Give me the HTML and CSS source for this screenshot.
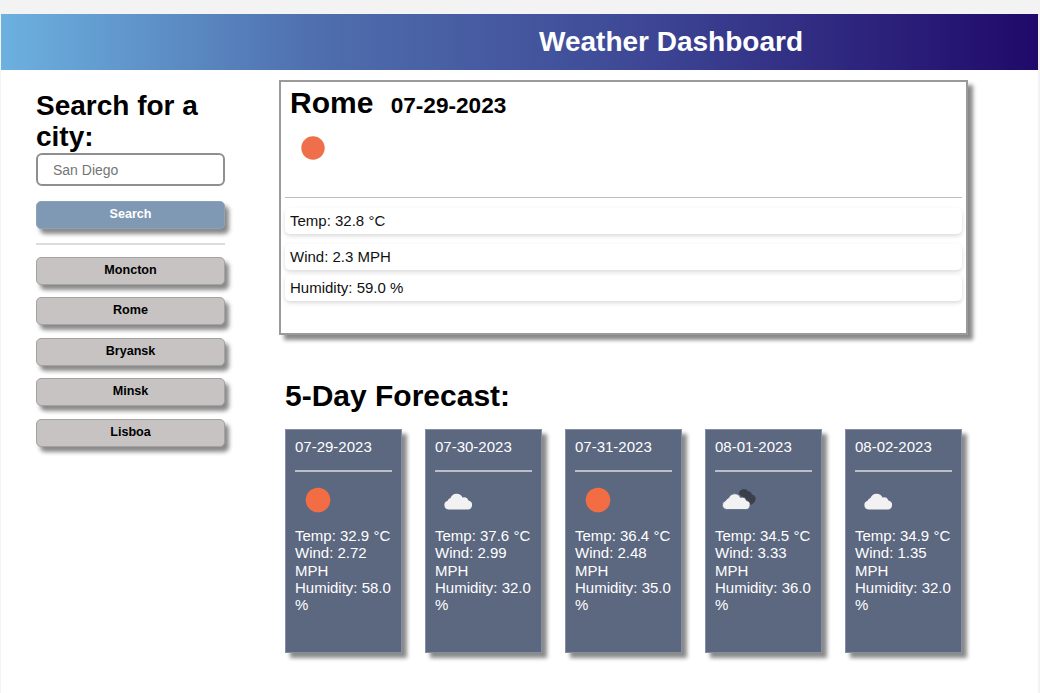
FILE: index.html
```html
<!DOCTYPE html>
<html lang="en">
  <head>
    <meta charset="UTF-8" />
    <meta name="viewport" content="width=device-width, initial-scale=1.0" />
    <title>Weather Dashboard</title>
    <link rel="stylesheet" href="styles.css">
  </head>
  <body>
    <div class="page">
      <!-- Website title -->
      <header class="top-bar">
        <h1>Weather Dashboard</h1>
      </header>

      <div class="content">
        <!-- City search -->
        <aside class="sidebar">
          <h2 class="search-title">Search for a city:</h2>
          <input class="search-input" type="text" placeholder="San Diego" />
          <button class="btn btn-search">Search</button>
          <hr class="side-line" />
          <button class="btn btn-city">Moncton</button>
          <button class="btn btn-city">Rome</button>
          <button class="btn btn-city">Bryansk</button>
          <button class="btn btn-city">Minsk</button>
          <button class="btn btn-city">Lisboa</button>
        </aside>

        <main class="main">
          <!-- Current weather -->
          <section class="current">
            <h2 class="current-title">Rome <span class="current-date">07-29-2023</span></h2>
            <div class="current-icon">
              <svg width="50" height="50" viewBox="0 0 50 50"><circle cx="25" cy="25" r="11.700" fill="#ef6f4c" /></svg>
            </div>
            <hr class="current-line" />
            <p class="stat stat-temp">Temp: 32.8 °C</p>
            <p class="stat stat-wind">Wind: 2.3 MPH</p>
            <p class="stat stat-hum">Humidity: 59.0 %</p>
          </section>

          <!-- Forecast -->
          <h2 class="forecast-title">5-Day Forecast:</h2>
          <section class="forecast">
            <article class="day">
              <p class="day-date">07-29-2023</p>
              <hr class="day-line" />
              <svg class="day-icon" width="50" height="50" viewBox="0 0 50 50"><circle cx="23" cy="25" r="12.300" fill="#f26d43" /></svg>
              <p class="day-text">Temp: 32.9 °C<br />Wind: 2.72 MPH<br />Humidity: 58.0 %</p>
            </article>
            <article class="day">
              <p class="day-date">07-30-2023</p>
              <hr class="day-line" />
              <svg class="day-icon" width="50" height="50" viewBox="0 0 50 50"><path d="M13.500 34.500H32.500A4.500 4.500 0 0 0 33.500 25.600A5 5 0 0 0 27.500 22.500A6.500 6.500 0 0 0 15.500 23A4.500 4.500 0 0 0 12.600 25.700A4.500 4.500 0 0 0 13.500 34.500Z" fill="#f2f2f2" /></svg>
              <p class="day-text">Temp: 37.6 °C<br />Wind: 2.99 MPH<br />Humidity: 32.0 %</p>
            </article>
            <article class="day">
              <p class="day-date">07-31-2023</p>
              <hr class="day-line" />
              <svg class="day-icon" width="50" height="50" viewBox="0 0 50 50"><circle cx="23" cy="25" r="12.300" fill="#f26d43" /></svg>
              <p class="day-text">Temp: 36.4 °C<br />Wind: 2.48 MPH<br />Humidity: 35.0 %</p>
            </article>
            <article class="day">
              <p class="day-date">08-01-2023</p>
              <hr class="day-line" />
              <svg class="day-icon" width="50" height="50" viewBox="0 0 50 50"><path d="M24 19A5 5 0 0 1 33 16A5 5 0 0 1 37 19.500A4.500 4.500 0 0 1 39 27.500L36 30Z" fill="#3b3f4a" /><path d="M11.500 34.500H30.500A4.500 4.500 0 0 0 31.500 25.600A5 5 0 0 0 25.500 22.500A6.500 6.500 0 0 0 13.500 23A4.500 4.500 0 0 0 10.600 25.700A4.500 4.500 0 0 0 11.500 34.500Z" fill="#f2f2f2" stroke="#5c6780" stroke-width="0.800" /></svg>
              <p class="day-text">Temp: 34.5 °C<br />Wind: 3.33 MPH<br />Humidity: 36.0 %</p>
            </article>
            <article class="day">
              <p class="day-date">08-02-2023</p>
              <hr class="day-line" />
              <svg class="day-icon" width="50" height="50" viewBox="0 0 50 50"><path d="M13.500 34.500H32.500A4.500 4.500 0 0 0 33.500 25.600A5 5 0 0 0 27.500 22.500A6.500 6.500 0 0 0 15.500 23A4.500 4.500 0 0 0 12.600 25.700A4.500 4.500 0 0 0 13.500 34.500Z" fill="#f2f2f2" /></svg>
              <p class="day-text">Temp: 34.9 °C<br />Wind: 1.35 MPH<br />Humidity: 32.0 %</p>
            </article>
          </section>
        </main>
      </div>
    </div>
  </body>
</html>
```

FILE: styles.css
```css
/* Full website */
body {
  font-family: "Liberation Sans", Arial, sans-serif;
  background-color: #f3f3f4;
  margin: 0;
  padding: 14px 2px 0 1px;
  color: #000;
}

.page {
  background-color: #fff;
  height: 679px;
  overflow: hidden;
}

/* Website title */
.top-bar {
  height: 56px;
  background: linear-gradient(90deg, #6cb1e0, #4f6fae 30%, #3f4a97 60%, #20096a);
  display: flex;
  align-items: center;
  justify-content: center;
  padding-left: 303px;
  box-sizing: border-box;
}
.top-bar h1 {
  margin: 0;
  color: #fff;
  font-size: 28px;
  line-height: 56px;
}

.content {
  display: flex;
}

/* City search */
.sidebar {
  width: 189px;
  margin-left: 35px;
  padding-top: 20px;
}
.search-title {
  margin: 0;
  font-size: 28px;
  line-height: 31px;
}
.search-input {
  display: block;
  box-sizing: border-box;
  width: 189px;
  height: 33px;
  margin-top: 1px;
  padding: 0 15px;
  border: 2px solid #8f8f92;
  border-radius: 6px;
  font-family: inherit;
  font-size: 14px;
}
.search-input::placeholder {
  color: #757575;
}
.btn {
  display: block;
  box-sizing: border-box;
  width: 189px;
  height: 28px;
  padding: 0 0 2px;
  border: 1px solid #a5a2a2;
  border-radius: 5px;
  font-family: inherit;
  font-size: 12.6px;
  font-weight: bold;
  box-shadow: 4px 5px 4px #8a8a8a;
}
.btn-search {
  margin-top: 15px;
  background-color: #7f99b5;
  border-color: #8ea3b9;
  color: #fff;
}
.btn-city {
  margin-bottom: 12.4px;
  background-color: #c7c3c3;
  color: #000;
}
.side-line {
  margin: 14px 0 12px;
  border: 0;
  height: 2px;
  background-color: #dcdcdc;
}

.main {
  margin-left: 54px;
  padding-top: 10px;
}

/* Current weather */
.current {
  box-sizing: border-box;
  width: 689px;
  height: 255px;
  border: 2px solid #9a9a9a;
  box-shadow: 5px 5px 4px #8a8a8a;
  padding: 0 4px;
}
.current-title {
  margin: 0;
  padding: 3px 0 0 5px;
  font-size: 30px;
  line-height: 35px;
}
.current-date {
  margin-left: 9px;
  font-size: 22.6px;
}
.current-icon {
  height: 50px;
  margin: 0 0 0 3px;
}
.current-icon svg {
  display: block;
}
.current-line {
  margin: 24px 0 0;
  border: 0;
  height: 1px;
  background-color: #bdbdbd;
}
.stat {
  margin: 0;
  padding-left: 5px;
  font-size: 15px;
  line-height: 26px;
  color: #111;
  border-radius: 5px;
  box-shadow: 0 2px 4px #00000026;
}
.stat-temp {
  margin-top: 10px;
}
.stat-wind {
  margin-top: 10px;
}
.stat-hum {
  margin-top: 5px;
}

/* Forecast */
.forecast-title {
  margin: 45px 0 0 6px;
  font-size: 30px;
  line-height: 32px;
}
.forecast {
  display: flex;
  gap: 23px;
  margin: 17px 0 0 6px;
}
.day {
  box-sizing: border-box;
  width: 117px;
  height: 224px;
  padding: 0 9px;
  background-color: #5c6780;
  border: 1px solid #8390a4;
  box-shadow: 5px 5px 4px #8a8a8a;
  color: #fff;
}
.day-date {
  margin: 8px 0 0;
  font-size: 15px;
  line-height: 18px;
}
.day-line {
  margin: 14px 0 0;
  border: 0;
  height: 2px;
  background-color: #b9bec9;
}
.day-icon {
  display: block;
  margin-top: 3px;
}
.day-text {
  margin: 2px 0 0;
  font-size: 15px;
  line-height: 17.25px;
}
```
